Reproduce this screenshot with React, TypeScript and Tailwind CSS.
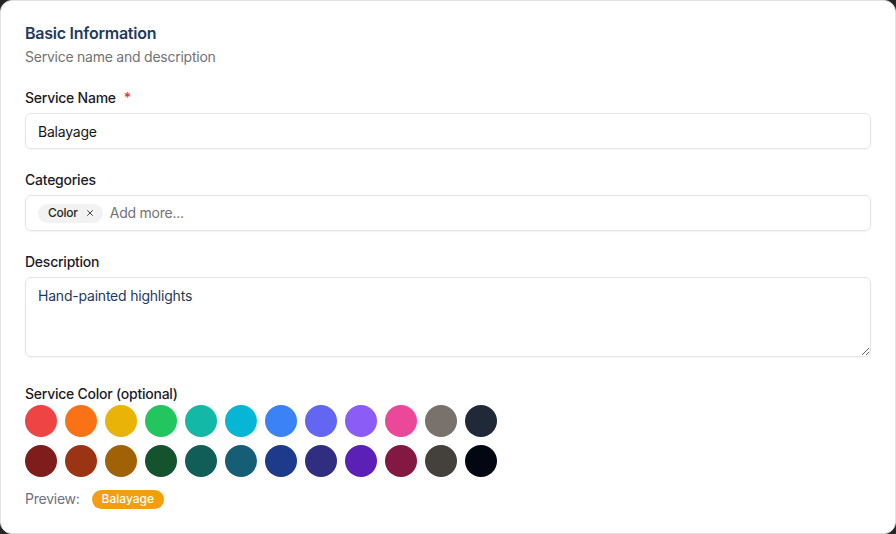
const row1 = ['#ef4444', '#f97316', '#eab308', '#22c55e', '#14b8a6', '#06b6d4', '#3b82f6', '#6366f1', '#8b5cf6', '#ec4899', '#78716c', '#1f2937'];
const row2 = ['#7f1d1d', '#9a3412', '#a16207', '#14532d', '#115e59', '#155e75', '#1e3a8a', '#312e81', '#5b21b6', '#831843', '#44403c', '#030712'];

function Label({ children, required }: { children: React.ReactNode; required?: boolean }) {
  return (
    <div className="text-sm leading-5 font-medium text-[#1c1c28]">
      {children}
      {required && <span className="ml-2 text-red-500">*</span>}
    </div>
  );
}

function Swatches({ colors }: { colors: string[] }) {
  return (
    <div className="flex gap-2">
      {colors.map((c) => (
        <button key={c} type="button" className="w-8 h-8 rounded-full shrink-0" style={{ background: c }} />
      ))}
    </div>
  );
}

export default function App() {
  return (
    <div className="w-[896px] h-[534px] bg-[#262626] font-['Inter',sans-serif] tracking-[-0.015em]">
      <div className="h-full bg-white rounded-xl border border-[#e2e2e2] px-6 pt-5 overflow-hidden">
        {/* header */}
        <h2 className="text-base leading-6 font-semibold text-[#1e3a5f]">Basic Information</h2>
        <p className="mt-0.5 text-sm leading-5 text-[#737373]">Service name and description</p>

        <div className="mt-[21px] flex flex-col">
          <Label required>Service Name</Label>
          <input
            defaultValue="Balayage"
            className="mt-[5px] h-9 w-full rounded-md border border-[#e5e5e5] px-3 text-sm tracking-[-0.015em] text-[#171717] shadow-xs outline-none"
          />

          <div className="mt-[21px]">
            <Label>Categories</Label>
          </div>
          <div className="mt-[5px] h-9 w-full rounded-md border border-[#e5e5e5] px-3 shadow-xs flex items-center gap-[7px]">
            <span className="inline-flex items-center gap-[7px] rounded-full bg-[#f2f2f2] pl-2.5 pr-2 h-[19px] text-xs font-medium text-[#262626]">
              Color
              <svg viewBox="0 0 24 24" className="w-2.5 h-2.5" fill="none" stroke="currentColor" strokeWidth="2" strokeLinecap="round">
                <path d="M18 6 6 18M6 6l12 12" />
              </svg>
            </span>
            <span className="text-sm text-[#737373]">Add more...</span>
          </div>

          <div className="mt-[21px]">
            <Label>Description</Label>
          </div>
          <textarea
            defaultValue="Hand-painted highlights"
            className="mt-[5px] block h-20 w-full rounded-md border border-[#e5e5e5] px-3 py-2 text-sm tracking-[-0.015em] text-[#1e3a5f] shadow-xs outline-none"
          />

          <div className="mt-[27px]">
            <Label>Service Color (optional)</Label>
          </div>
          <div className="mt-px flex flex-col gap-2">
            <Swatches colors={row1} />
            <Swatches colors={row2} />
          </div>

          <div className="mt-3 flex items-center gap-3">
            <span className="text-sm text-[#6b7280]">Preview:</span>
            <span className="inline-flex items-center h-[19px] rounded-full bg-[#f59e0b] px-2.5 text-xs font-medium tracking-normal text-white">
              Balayage
            </span>
          </div>
        </div>
      </div>
    </div>
  );
}
